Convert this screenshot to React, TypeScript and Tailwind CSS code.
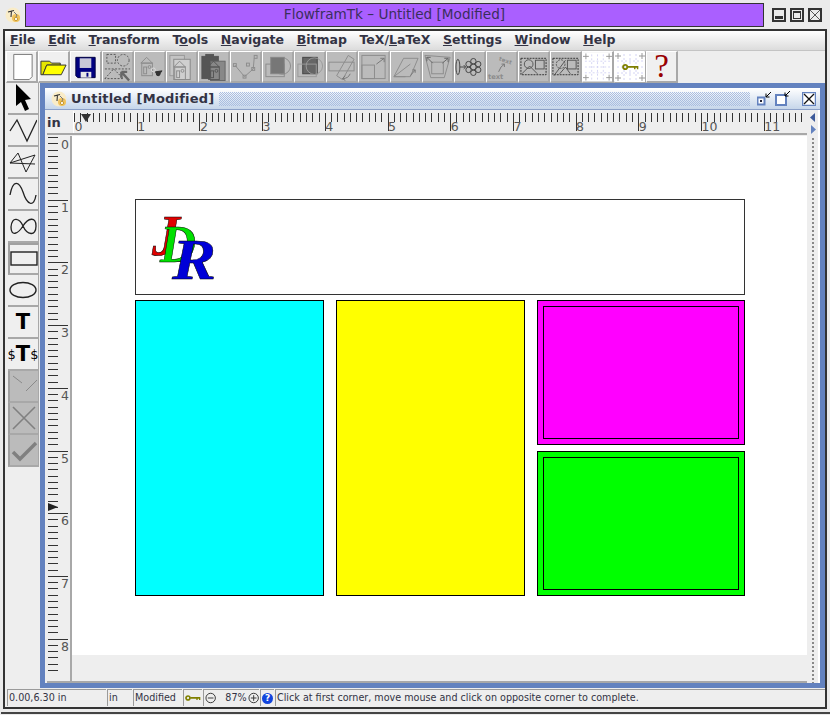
import React from "react";

const grey = "#8c8c8c";

const AppIcon = () => (
  <svg width="16" height="16" viewBox="0 0 16 16">
    <circle cx="8" cy="8" r="7.5" fill="#f9ecc8" />
    <circle cx="11" cy="11" r="4" fill="#f0c25c" />
    <path d="M3 5 L9 3.5 M6.5 3.5 L6 10" stroke="#333" strokeWidth="1.1" fill="none" />
    <path d="M9 5 L12 8 L10 12" stroke="#777" strokeWidth="1" fill="none" />
    <circle cx="11" cy="12" r="1.6" fill="#fff" stroke="#c89a30" />
  </svg>
);

const KeyIcon = ({ w = 24 }: { w?: number }) => (
  <svg width={w} height="10" viewBox="0 0 24 10">
    <circle cx="4.5" cy="5" r="3" fill="none" stroke="#808000" strokeWidth="2.6" />
    <path d="M8 3.5 H23 V8 H21 V6 H19 V8 H17 V6 H8 Z" fill="#808000" />
  </svg>
);

const I = ({ children }: { children: React.ReactNode }) => (
  <svg width="30" height="30" viewBox="0 0 30 30" fill="none" stroke={grey} strokeWidth="1">
    {children}
  </svg>
);

const houses = (
  <>
    <path d="M9 14 L15 8 L21 14 Z" />
    <rect x="10" y="14" width="11" height="13" />
    <rect x="12" y="18" width="3" height="7" />
    <circle cx="18" cy="18" r="1.5" />
  </>
);

const gridMarks = (
  <g stroke="#999">
    <rect x="0" y="0" width="30" height="30" fill="#fff" stroke="none" />
    <path d="M15 2 V28 M2 15 H28 M9 2 V28 M21 2 V28 M2 9 H28 M2 21 H28" stroke="#d4d4f4" strokeDasharray="2 2" />
    <path d="M3 1 V7 M0 4 H6 M27 1 V7 M24 4 H30 M3 23 V29 M0 26 H6 M27 23 V29 M24 26 H30" />
  </g>
);

const topIcons: { off?: boolean; icon: React.ReactNode }[] = [
  {
    icon: (
      <svg width="30" height="30" viewBox="0 0 30 30">
        <path d="M7 2 H26 V25 L23 28 H7 Z" fill="#fff" stroke="#777" />
      </svg>
    ),
  },
  {
    icon: (
      <svg width="30" height="30" viewBox="0 0 30 30">
        <path d="M2 9 H11 L13 11 H22 V13 H8 L4 23 H2 Z" fill="#e6e600" stroke="#333" />
        <path d="M8 13 H28 L23 23 H4 Z" fill="#ffff00" stroke="#333" />
      </svg>
    ),
  },
  {
    icon: (
      <svg width="30" height="30" viewBox="0 0 30 30">
        <path d="M5 5 H25 V26 H7 L5 24 Z" fill="#000080" stroke="#000040" />
        <rect x="9" y="6" width="12" height="10" fill="#c8c8d8" />
        <rect x="10" y="20" width="11" height="6" fill="#e8e8e8" />
        <rect x="16" y="21" width="2" height="4" fill="#000080" />
      </svg>
    ),
  },
  {
    off: true,
    icon: (
      <I>
        <g stroke="#555" strokeDasharray="2 1.5">
          <rect x="4" y="2" width="9" height="9" />
          <circle cx="21" cy="8" r="6" />
          <path d="M2 27 L11 17 L21 27 Z" />
          <path d="M2 17 H28" />
        </g>
        <path d="M19 20 L27 29 M19 20 H25 M19 20 V26" stroke="#666" strokeWidth="2.5" />
      </I>
    ),
  },
  {
    off: true,
    icon: (
      <I>
        <g transform="translate(-3 -3)">{houses}</g>
        <circle cx="19" cy="18" r="2" stroke="#ddd" />
        <path d="M21 20 L28 19 L24 24 Z" fill="#333" stroke="#333" />
        <circle cx="24" cy="22" r="2" fill="#333" stroke="#333" />
      </I>
    ),
  },
  {
    off: true,
    icon: (
      <I>
        <rect x="3" y="3" width="15" height="21" stroke="#999" fill="#c4c4c4" />
        <rect x="7" y="7" width="17" height="21" fill="#cfcfcf" stroke="#888" />
        <g transform="translate(-2 1)">{houses}</g>
      </I>
    ),
  },
  {
    off: true,
    icon: (
      <I>
        <rect x="3" y="4" width="17" height="23" fill="#555" stroke="#555" />
        <rect x="7" y="2" width="8" height="3" fill="#555" stroke="#555" />
        <rect x="12" y="9" width="15" height="20" fill="#888" stroke="#666" />
        <g transform="translate(0 1)" stroke="#555">{houses}</g>
      </I>
    ),
  },
  {
    off: true,
    icon: (
      <I>
        <path d="M4 13 L14 25 L23 17 L24 6" />
        <rect x="2.5" y="11.5" width="3" height="3" />
        <rect x="12.5" y="23.5" width="3" height="3" />
        <rect x="21.5" y="15.5" width="3" height="3" />
        <rect x="16" y="11" width="3" height="3" />
        <rect x="24" y="3" width="3" height="3" />
      </I>
    ),
  },
  {
    off: true,
    icon: (
      <I>
        <circle cx="20" cy="14" r="8.5" />
        <rect x="3" y="12" width="19" height="13" />
        <rect x="8" y="5" width="14" height="17" fill="#777" stroke="#888" />
      </I>
    ),
  },
  {
    off: true,
    icon: (
      <I>
        <rect x="8" y="5" width="15" height="17" fill="#666" stroke="#444" />
        <circle cx="20" cy="14" r="8.5" stroke="#999" />
        <rect x="3" y="12" width="19" height="13" stroke="#999" />
      </I>
    ),
  },
  {
    off: true,
    icon: (
      <I>
        <rect x="2" y="10" width="26" height="9" />
        <path d="M10 24 L22 3 L28 7 L16 28 Z" />
        <path d="M24 22 Q22 27 16 27 M16 27 L19 24 M16 27 L19 29" stroke="#777" />
      </I>
    ),
  },
  {
    off: true,
    icon: (
      <I>
        <rect x="3" y="3" width="24" height="24" />
        <rect x="3" y="13" width="13" height="14" />
        <path d="M18 12 L26 6 M26 6 H22 M26 6 V10" stroke="#777" />
      </I>
    ),
  },
  {
    off: true,
    icon: (
      <I>
        <path d="M3 25 L13 6 H28 L20 25 Z" />
        <path d="M3 25 L20 12 M3 25 H15" />
        <path d="M20 24 L25 18 M25 18 H22 M25 18 V21" stroke="#777" />
      </I>
    ),
  },
  {
    off: true,
    icon: (
      <I>
        <path d="M2 3 L28 5 L22 26 L8 26 Z" />
        <rect x="9" y="10" width="12" height="12" />
        <path d="M4 5 L10 11 M4 5 H8 M4 5 V9 M26 6 L20 11 M26 6 H22 M26 6 V10" stroke="#666" />
      </I>
    ),
  },
  {
    off: true,
    icon: (
      <svg width="30" height="30" viewBox="0 0 30 30" fill="none" stroke="#444">
        <ellipse cx="3" cy="15" rx="2" ry="8" />
        <path d="M5 15 H11 M9 13 L11 15 L9 17" />
        <circle cx="19" cy="15" r="3" />
        <circle cx="19" cy="9" r="2.8" />
        <circle cx="19" cy="21" r="2.8" />
        <circle cx="14" cy="12" r="2.8" />
        <circle cx="24" cy="12" r="2.8" />
        <circle cx="14" cy="18" r="2.8" />
        <circle cx="24" cy="18" r="2.8" />
      </svg>
    ),
  },
  {
    off: true,
    icon: (
      <I>
        <text x="1" y="27" fontSize="7" fontFamily="'DejaVu Sans', sans-serif" fontWeight="700" fill={grey} stroke="none">
          text
        </text>
        <text x="12" y="8" fontSize="6" fontFamily="'DejaVu Sans', sans-serif" fontWeight="700" fill={grey} stroke="none" transform="rotate(20 12 8)">
          text
        </text>
        <path d="M12 20 Q14 14 18 12 M18 12 H15 M18 12 V15" stroke="#777" />
      </I>
    ),
  },
  {
    off: true,
    icon: (
      <svg width="30" height="30" viewBox="0 0 30 30" fill="none" stroke="#555">
        <rect x="2" y="6" width="26" height="17" strokeDasharray="2 1" stroke="#333" />
        <circle cx="10" cy="12" r="4.5" />
        <path d="M3 22 L11 14 L19 22" />
        <rect x="17" y="8" width="9" height="9" />
      </svg>
    ),
  },
  {
    off: true,
    icon: (
      <svg width="30" height="30" viewBox="0 0 30 30" fill="none" stroke="#555">
        <rect x="2" y="6" width="26" height="17" strokeDasharray="2 1" stroke="#333" />
        <circle cx="10" cy="12" r="4.5" strokeDasharray="2 1" />
        <path d="M3 24 L15 8 M9 22 L15 15 L20 22" />
        <rect x="17" y="8" width="9" height="9" />
      </svg>
    ),
  },
  { icon: <svg width="30" height="30" viewBox="0 0 30 30">{gridMarks}</svg> },
  {
    icon: (
      <div className="relative w-[30px] h-[30px]">
        <svg width="30" height="30" viewBox="0 0 30 30">{gridMarks}</svg>
        <div className="absolute left-[7px] top-[10px] flex">
          <KeyIcon w={17} />
        </div>
      </div>
    ),
  },
  {
    icon: (
      <span className="text-[33px] leading-none text-[#990000] font-['Liberation_Serif',serif]">?</span>
    ),
  },
];

const S = ({ children }: { children: React.ReactNode }) => (
  <svg width="28" height="26" viewBox="0 0 28 26" fill="none" stroke="#222" strokeWidth="1.3">
    {children}
  </svg>
);

const leftTools: { off?: boolean; pressed?: boolean; icon: React.ReactNode }[] = [
  {
    icon: (
      <svg width="28" height="28" viewBox="0 0 28 28">
        <path d="M7 0 L22 15 L16 16 L20 25 L16 27 L12 18 L7 22 Z" fill="#000" />
      </svg>
    ),
  },
  { icon: <S><path d="M1 14 L8 3 L18 24 L28 3" /></S> },
  { icon: <S><path d="M1 14 L26 6 L17 23 L9 4 L1 14 L26 15" strokeWidth="1" /></S> },
  { icon: <S><path d="M1 14 C4 -2 10 0 14 11 C18 24 25 27 27 14" /></S> },
  { icon: <S><path d="M2 14 C3 2 11 6 14 13 C18 22 27 24 27 13 C27 3 19 5 14 13 C9 21 2 24 2 14 Z" /></S> },
  { pressed: true, icon: <svg width="28" height="16" viewBox="0 0 28 16"><rect x="1" y="1" width="26" height="13" fill="none" stroke="#222" strokeWidth="1.4" /></svg> },
  { icon: <svg width="28" height="18" viewBox="0 0 28 18"><ellipse cx="14" cy="9" rx="13" ry="7.5" fill="none" stroke="#222" strokeWidth="1.4" /></svg> },
  { icon: <span className="text-[21px] font-bold leading-none text-black font-['DejaVu_Sans',sans-serif]">T</span> },
  {
    icon: (
      <span className="leading-none text-black font-['DejaVu_Sans',sans-serif] flex items-center text-[13px]">
        $<span className="text-[21px] font-bold">T</span>$
      </span>
    ),
  },
  { off: true, icon: <svg width="28" height="26" viewBox="0 0 28 26" stroke="#8a8a8a"><path d="M3 3 L12 10 M16 18 L27 7" /></svg> },
  { off: true, icon: <svg width="28" height="26" viewBox="0 0 28 26" stroke="#808080" strokeWidth="1.6"><path d="M3 2 L25 24 M25 2 L3 24" /></svg> },
  { off: true, icon: <svg width="28" height="26" viewBox="0 0 28 26" stroke="#808080" strokeWidth="3.5" fill="none"><path d="M3 15 L10 22 L26 6" /></svg> },
];

const menus: [string, string, string][] = [
  ["", "F", "ile"],
  ["", "E", "dit"],
  ["", "T", "ransform"],
  ["T", "o", "ols"],
  ["", "N", "avigate"],
  ["", "B", "itmap"],
  ["TeX/", "L", "aTeX"],
  ["", "S", "ettings"],
  ["", "W", "indow"],
  ["", "H", "elp"],
];

const rulerFont = "'DejaVu Sans', sans-serif";
const step = 62.7;

const HRuler = () => {
  const ticks = Array.from({ length: 117 }, (_, i) => i);
  return (
    <svg width="734" height="23" viewBox="0 0 734 23">
      {ticks.map((i) => {
        const x = Math.round((i * step) / 10) + 0.5;
        return <line key={i} x1={x} x2={x} y1="2" y2={i % 10 === 0 && i > 0 ? 20 : 11} stroke="#333" />;
      })}
      {Array.from({ length: 12 }, (_, i) => (
        <text key={i} x={0.5 + i * step} y="20" fontSize="12.5" fill="#555" fontFamily={rulerFont}>
          {i}
        </text>
      ))}
      <path d="M7 3 H17 L12 11 Z" fill="#333" />
    </svg>
  );
};

const VRuler = () => {
  const ticks = Array.from({ length: 86 }, (_, i) => i);
  return (
    <svg width="24" height="541" viewBox="0 0 24 541">
      {ticks.map((i) => {
        const y = Math.round(1 + (i * step) / 10) + 0.5;
        return <line key={i} x1="1" x2={i % 10 === 0 && i > 0 ? 21 : 11} y1={y} y2={y} stroke="#333" />;
      })}
      {Array.from({ length: 9 }, (_, i) => (
        <text key={i} x="14" y={13 + i * step} fontSize="12.5" fill="#555" fontFamily={rulerFont}>
          {i}
        </text>
      ))}
      <path d="M1 367 V375 L11 371 Z" fill="#222" />
    </svg>
  );
};

const Cell = ({ className, children }: { className: string; children?: React.ReactNode }) => (
  <div className={`h-[17px] flex items-center shrink-0 border-l border-t border-[#9a9a9a] overflow-hidden whitespace-nowrap ${className}`}>
    {children}
  </div>
);

const Circle = ({ plus }: { plus?: boolean }) => (
  <svg width="12" height="12" viewBox="0 0 12 12" fill="none" stroke="#333">
    <circle cx="6" cy="6" r="5" />
    <path d={plus ? "M3 6 H9 M6 3 V9" : "M3 6 H9"} />
  </svg>
);

export default function App() {
  return (
    <div className="w-[830px] h-[715px] overflow-hidden bg-[#ebebeb] flex flex-col font-['DejaVu_Sans',sans-serif]">
      {/* window manager bar */}
      <div className="h-[29px] flex items-center shrink-0">
        <div className="w-[25px] flex justify-center">
          <AppIcon />
        </div>
        <div className="w-[739px] h-[24px] bg-[#aa5fff] border border-[#333] flex items-center justify-center text-[13.6px] text-[#3a2e5c]">
          FlowframTk – Untitled [Modified]
        </div>
        <div className="ml-[8px] flex gap-[4px]">
          <div className="w-[14px] h-[14px] border-2 border-[#333] flex items-end justify-center pb-[1px]">
            <div className="w-[8px] h-[3px] bg-[#333]" />
          </div>
          <div className="w-[14px] h-[14px] border-2 border-[#333] flex items-center justify-center">
            <div className="w-[8px] h-[8px] border border-[#333] border-t-2" />
          </div>
          <div className="w-[14px] h-[14px] border-2 border-[#333] flex items-center justify-center">
            <svg width="10" height="10" viewBox="0 0 10 10" stroke="#555">
              <path d="M0 0 L10 10 M10 0 L0 10" />
            </svg>
          </div>
        </div>
      </div>

      {/* main frame */}
      <div className="ml-[3px] w-[824px] h-[680px] border-2 border-[#333] border-b-2 bg-[#eeeeee] flex flex-col shrink-0">
        <div className="h-[20px] shrink-0 flex items-center pl-[5px] gap-[12.6px] bg-gradient-to-b from-white to-[#dcdcdc] border-b border-[#c4c4c4] text-[12.5px] font-bold text-[#333344]">
          {menus.map(([a, u, b]) => (
            <span key={a + u + b}>
              {a}
              <span className="underline">{u}</span>
              {b}
            </span>
          ))}
        </div>

        <div className="h-[32px] shrink-0 flex pl-[1px]">
          {topIcons.map((t, i) => (
            <div
              key={i}
              className={`w-[32px] h-[32px] flex items-center justify-center border-t border-r-2 border-b-2 border-l border-[#a8a8a8] border-t-white border-l-white ${t.off ? "bg-[#bbbbbb] border-t-[#cfcfcf] border-l-[#cfcfcf]" : "bg-[#f0f0f0]"}`}
            >
              {t.icon}
            </div>
          ))}
        </div>

        <div className="flex flex-1 min-h-0">
          <div className="w-[35px] shrink-0 pl-[3px] flex flex-col">
            {leftTools.map((t, i) => (
              <div
                key={i}
                className={`w-[31px] h-[32px] flex items-center justify-center border-b-2 border-r border-[#a8a8a8] ${t.off ? "bg-[#bbbbbb] border-l-2 border-l-[#a0a0a0]" : "bg-[#efefef]"} ${t.pressed ? "border-l-2 border-t-2 border-l-[#a0a0a0] border-t-[#a0a0a0]" : ""}`}
              >
                {t.icon}
              </div>
            ))}
          </div>

          {/* desktop with the internal window */}
          <div className="flex-1 flex flex-col min-w-0">
            <div className="h-[605px] border-[5px] border-[#6382bf] bg-[#eeeeee] flex flex-col shrink-0">
              <div className="h-[22px] shrink-0 flex items-center bg-gradient-to-b from-white to-[#c6d6ea] border-b border-[#8ba0c8] pl-[6px] pr-[4px]">
                <AppIcon />
                <span className="ml-[4px] text-[13px] font-bold text-[#333344] whitespace-nowrap tracking-[0.2px]">Untitled [Modified]</span>
                <div className="ml-[5px] flex-1 h-[14px] bg-[repeating-conic-gradient(#a9bde0_0_25%,transparent_0_50%)] bg-[length:2px_2px]" />
                <div className="ml-[7px] flex items-center">
                  <svg width="15" height="15" viewBox="0 0 15 15">
                    <rect x="0.5" y="6.5" width="7" height="7" fill="#fff" stroke="#6382bf" strokeWidth="2" />
                    <rect x="3" y="9" width="2" height="2" fill="#223" />
                    <path d="M14 1 L9 6 M9 2.5 V6 H12.5" stroke="#000" fill="none" />
                  </svg>
                  <svg width="16" height="16" viewBox="0 0 16 16" className="ml-[3px]">
                    <rect x="1" y="4" width="10" height="10" fill="#fff" stroke="#6382bf" strokeWidth="2" />
                    <path d="M15 0 L10 5 M10 1.5 V5 H13.5" stroke="#000" fill="none" />
                  </svg>
                  <svg width="14" height="14" viewBox="0 0 14 14" className="ml-[11px]">
                    <rect x="0.5" y="0.5" width="13" height="13" fill="#fff" stroke="#6382bf" strokeWidth="1.5" />
                    <path d="M2 2 L12 12 M12 2 L2 12" stroke="#111" strokeWidth="1.3" />
                  </svg>
                </div>
              </div>

              <div className="flex-1 flex min-h-0">
                <div className="w-[762px] flex flex-col pl-[2px] pt-[1px]">
                  <div className="flex h-[24px] shrink-0 border-b-2 border-[#a8a8a8]">
                    <div className="w-[26px] text-[13px] font-bold text-[#333344] pt-[2px]">in</div>
                    <div className="flex-1 border-l border-white overflow-hidden">
                      <HRuler />
                    </div>
                  </div>
                  <div className="flex flex-1 min-h-0 pt-[1px]">
                    <div className="w-[25px] shrink-0 border-r-2 border-[#a8a8a8] overflow-hidden">
                      <VRuler />
                    </div>
                    <div className="flex-1 min-w-0 flex flex-col">
                      <div className="h-[519px] shrink-0 bg-white pl-[63px] pt-[63px] flex flex-col gap-[5px]">
                        <div className="w-[610px] h-[96px] border border-[#333] bg-white shrink-0">
                          <svg width="90" height="94" viewBox="0 0 90 94">
                            <g fontFamily="'Liberation Serif', serif" fontStyle="italic" fontWeight="700" stroke="#000" strokeWidth="0.5">
                              <text x="16" y="55" fontSize="56" fill="#e00000" textLength="28" lengthAdjust="spacingAndGlyphs">J</text>
                              <text x="24" y="62" fontSize="52" fill="#00e000" textLength="36" lengthAdjust="spacingAndGlyphs">D</text>
                              <text x="36" y="79" fontSize="58" fill="#0000d8" textLength="44" lengthAdjust="spacingAndGlyphs">R</text>
                            </g>
                          </svg>
                        </div>
                        <div className="flex gap-[12px]">
                          <div className="w-[189px] h-[296px] bg-[#00ffff] border border-black" />
                          <div className="w-[189px] h-[296px] bg-[#ffff00] border border-black" />
                          <div className="w-[208px] flex flex-col gap-[6px]">
                            <div className="h-[145px] bg-[#ff00ff] border border-black p-[5px]">
                              <div className="w-full h-full border border-black" />
                            </div>
                            <div className="h-[145px] bg-[#00ff00] border border-black p-[5px]">
                              <div className="w-full h-full border border-black" />
                            </div>
                          </div>
                        </div>
                      </div>
                      <div className="flex-1 bg-[#eeeeee]" />
                    </div>
                  </div>
                  <div className="h-[2px] shrink-0 bg-[#a8a8a8]" />
                </div>

                {/* split pane divider */}
                <div className="flex-1 flex flex-col items-center pt-[3px] pr-[2px] ml-[3px] gap-[3px] border-r-2 border-white">
                  <svg width="6" height="9" viewBox="0 0 6 9"><path d="M5 0 V9 L0 4.5 Z" fill="#3d5a9a" /></svg>
                  <svg width="6" height="9" viewBox="0 0 6 9"><path d="M1 0 V9 L6 4.5 Z" fill="#6382bf" /></svg>
                  <div className="w-[4px] flex-1 bg-[radial-gradient(#888_0.8px,transparent_1px)] bg-[length:4px_4px]" />
                </div>
              </div>
            </div>
            <div className="h-[1px] bg-[#808080] mt-[1px]" />
          </div>
        </div>

        {/* status bar */}
        <div className="h-[19px] shrink-0 flex items-end pl-[2px] gap-[1px] text-[9.6px] text-[#333344] pb-[1px]">
          <Cell className="w-[99px] pl-[1px]">0.00,6.30 in</Cell>
          <Cell className="w-[25px] pl-[1px]">in</Cell>
          <Cell className="w-[49px] pl-[1px]">Modified</Cell>
          <Cell className="w-[19px] pl-[1px]"><KeyIcon w={16} /></Cell>
          <Cell className="w-[56px] pl-[1px] gap-[1px]">
            <Circle />
            <span className="ml-[8px]">87%</span>
            <Circle plus />
          </Cell>
          <Cell className="w-[14px] pl-[1px]">
            <span className="w-[11px] h-[11px] rounded-full bg-[#1144dd] text-white text-[9px] font-bold leading-none flex items-center justify-center">?</span>
          </Cell>
          <Cell className="flex-1 pl-[1px]">Click at first corner, move mouse and click on opposite corner to complete.</Cell>
        </div>
      </div>

      <div className="mt-[3px] h-[2px] bg-[#444] ml-[1px]" />
    </div>
  );
}
